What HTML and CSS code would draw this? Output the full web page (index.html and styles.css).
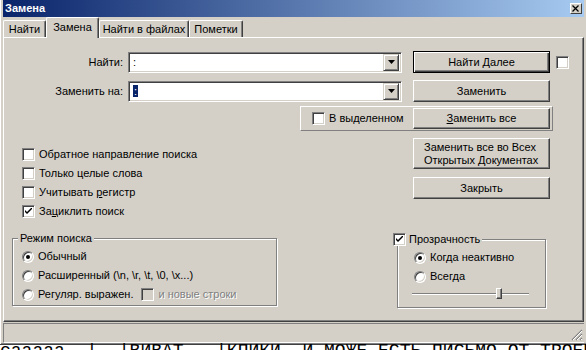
FILE: index.html
```html
<!DOCTYPE html>
<html lang="ru">
<head>
    <meta charset="UTF-8">
    <title>Замена</title>
    <link rel="stylesheet" href="styles.css">
</head>
<body>

    <div class="window">
        <div class="titlebar">
            <span class="title">Замена</span>
            <span class="close-btn">
                <svg width="8" height="7" viewBox="0 0 8 7"><path d="M0.5 0.5 L6.5 6.5 M6.5 0.5 L0.5 6.5" stroke="#000" stroke-width="1.3" fill="none"/></svg>
            </span>
        </div>

        <div class="tabs">
            <div class="tab tab-find">Найти</div>
            <div class="tab tab-replace active">Замена</div>
            <div class="tab tab-files">Найти в файлах</div>
            <div class="tab tab-marks">Пометки</div>
        </div>

        <div class="panel">
            <div class="find-grid">
                <label class="field-label">Найти:</label>
                <div class="combo">
                    <span class="combo-text">:</span>
                    <span class="combo-btn"><svg width="7" height="4" viewBox="0 0 7 4"><polygon points="0,0 7,0 3.5,4" fill="#000"/></svg></span>
                </div>
                <button class="btn default">Найти Далее</button>
                <span class="check"></span>

                <label class="field-label">Заменить на:</label>
                <div class="combo">
                    <span class="combo-text"><span class="selected">:</span></span>
                    <span class="combo-btn"><svg width="7" height="4" viewBox="0 0 7 4"><polygon points="0,0 7,0 3.5,4" fill="#000"/></svg></span>
                </div>
                <button class="btn">Заменить</button>
                <span></span>
            </div>

            <div class="sel-frame">
                <span class="check"></span>
                <span class="sel-label">В выделенном</span>
                <button class="btn btn-all"><u>З</u>аменить все</button>
            </div>

            <div class="middle">
                <div class="options">
                    <div class="opt"><span class="check"></span><span>Обратное направление поиска</span></div>
                    <div class="opt"><span class="check"></span><span>Только целые слова</span></div>
                    <div class="opt"><span class="check"></span><span>Учитывать <u>р</u>егистр</span></div>
                    <div class="opt"><span class="check checked"><svg width="7" height="7" viewBox="0 0 7 7"><path d="M0 2 L0 4 L2 6 L7 1 L7 -1 L2 4 Z" fill="#000"/></svg></span><span>За<u>ц</u>иклить поиск</span></div>
                </div>
                <div class="actions">
                    <button class="btn btn-tall">Заменить все во Всех<br>Открытых <u>Д</u>окументах</button>
                    <button class="btn">Закрыть</button>
                </div>
            </div>

            <div class="bottom">
                <fieldset class="group mode">
                    <legend>Режим поиска</legend>
                    <div class="opt"><span class="radio on"></span><span>Обычный</span></div>
                    <div class="opt"><span class="radio"></span><span>Расширенный (\n, \r, \t, \0, \x...)</span></div>
                    <div class="opt"><span class="radio"></span><span>Регуляр. выражен.</span><span class="check disabled"></span><span class="dim">и новые строки</span></div>
                </fieldset>

                <fieldset class="group transp">
                    <legend><span class="check checked"><svg width="7" height="7" viewBox="0 0 7 7"><path d="M0 2 L0 4 L2 6 L7 1 L7 -1 L2 4 Z" fill="#000"/></svg></span>Прозрачность</legend>
                    <div class="opt"><span class="radio on"></span><span>Когда неактивно</span></div>
                    <div class="opt"><span class="radio"></span><span>Всегда</span></div>
                    <div class="slider">
                        <div class="track"></div>
                        <div class="thumb"></div>
                    </div>
                </fieldset>
            </div>
        </div>

        <div class="statusbar">
            <svg class="grip" width="12" height="12" viewBox="0 0 12 12">
                <path d="M11 1 L1 11 M11 5 L5 11 M11 9 L9 11" stroke="#808080" stroke-width="1.2"/>
                <path d="M11 2 L2 11 M11 6 L6 11 M11 10 L10 11" stroke="#fff" stroke-width="1"/>
            </svg>
        </div>
    </div>

    <div class="editor">сааааа  |  |ВИВАТ   |КПИКИ, И МОЖЕ ЕСТЬ ПИСЬМО ОТ ТРОЕК</div>

</body>
</html>
```

FILE: styles.css
```css
body {
    margin: 0;
    width: 586px;
    height: 350px;
    overflow: hidden;
    background: #fff;
    font-family: "Liberation Sans", Arial, sans-serif;
    font-size: 11px;
    line-height: 13px;
    color: #000;
}
.window {
    box-sizing: border-box;
    height: 345px;
    padding: 0 2px 0 3px;
    background: #d4d0c8;
    border-bottom: 1px solid #404040;
    box-shadow: inset 1px 0 #fff, inset 0 -1px #808080;
}
.titlebar {
    height: 17px;
    display: flex;
    align-items: center;
    justify-content: space-between;
    background: linear-gradient(to right, #0a246a, #a6caf0);
}
.title {
    color: #fff;
    font-weight: bold;
    padding-left: 2px;
}
.close-btn {
    box-sizing: border-box;
    width: 12px;
    height: 11px;
    margin-right: 2px;
    display: flex;
    align-items: center;
    justify-content: center;
    background: #d4d0c8;
    border: 1px solid;
    border-color: #fff #404040 #404040 #fff;
}

/* tabs */
.tabs {
    height: 20px;
    display: flex;
    align-items: flex-end;
    position: relative;
    z-index: 1;
}
.tab {
    box-sizing: border-box;
    height: 17px;
    padding-top: 2px;
    text-align: center;
    background: #d4d0c8;
    border-top: 1px solid #fff;
    border-left: 1px solid #fff;
    border-right: 1px solid #404040;
    border-radius: 2px 2px 0 0;
    box-shadow: inset -1px 0 #808080;
}
.tab.active {
    height: 21px;
    margin-bottom: -1px;
    padding-top: 3px;
}
.tab-find { width: 43px; }
.tab-replace { width: 53px; }
.tab-files { width: 90px; }
.tab-marks { width: 54px; }

.panel {
    box-sizing: border-box;
    height: 285px;
    border: 1px solid;
    border-color: #fff #404040 #404040 #fff;
    box-shadow: inset -1px -1px #808080;
}

/* controls */
.btn {
    box-sizing: border-box;
    height: 22px;
    padding: 0;
    font: inherit;
    color: #000;
    background: #d4d0c8;
    border: 1px solid;
    border-color: #fff #404040 #404040 #fff;
    box-shadow: inset -1px -1px #808080;
}
.btn.default {
    border: 1px solid #000;
    box-shadow: inset 1px 1px #fff, inset -1px -1px #404040, inset -2px -2px #808080;
}
.check {
    box-sizing: border-box;
    flex: none;
    width: 13px;
    height: 13px;
    display: inline-flex;
    align-items: center;
    justify-content: center;
    background: #fff;
    border: 1px solid;
    border-color: #808080 #fff #fff #808080;
    box-shadow: inset 1px 1px #404040, inset -1px -1px #d4d0c8;
}
.radio {
    box-sizing: border-box;
    flex: none;
    width: 12px;
    height: 12px;
    border-radius: 50%;
    display: inline-flex;
    align-items: center;
    justify-content: center;
    background: #fff;
    border: 1px solid;
    border-color: #808080 #fff #fff #808080;
    box-shadow: inset 1px 1px #404040, inset -1px -1px #d4d0c8;
}
.radio.on::after {
    content: "";
    width: 4px;
    height: 4px;
    border-radius: 50%;
    background: #000;
}
.combo {
    box-sizing: border-box;
    height: 21px;
    display: flex;
    align-items: center;
    background: #fff;
    border: 1px solid;
    border-color: #808080 #fff #fff #808080;
    box-shadow: inset 1px 1px #404040, inset -1px -1px #d4d0c8;
    padding: 2px;
}
.combo-text {
    flex: 1;
    padding-left: 2px;
}
.selected {
    background: #0a246a;
    color: #fff;
    padding: 0 1px;
}
.combo-btn {
    box-sizing: border-box;
    width: 16px;
    height: 17px;
    display: flex;
    align-items: center;
    justify-content: center;
    background: #d4d0c8;
    border: 1px solid;
    border-color: #d4d0c8 #404040 #404040 #d4d0c8;
    box-shadow: inset 1px 1px #fff, inset -1px -1px #808080;
}

/* find / replace rows */
.find-grid {
    margin-top: 13px;
    display: grid;
    grid-template-columns: 124px 274px 148px 19px;
    grid-auto-rows: 22px;
    row-gap: 7px;
    align-items: center;
}
.field-label {
    text-align: right;
    padding-right: 5px;
}
.find-grid .btn {
    width: 137px;
    justify-self: end;
}
.find-grid .check {
    justify-self: end;
}

.sel-frame {
    box-sizing: border-box;
    width: 253px;
    height: 25px;
    margin: 4px 0 0 296px;
    padding: 0 2px 0 11px;
    display: flex;
    align-items: center;
    border: 1px solid;
    border-color: #fff #808080 #808080 #fff;
}
.sel-label {
    margin-left: 4px;
}
.btn-all {
    width: 137px;
    height: 21px;
    margin-left: auto;
}

.middle {
    display: grid;
    grid-template-columns: 409px 137px;
}
.options {
    padding: 14px 0 0 18px;
}
.opt {
    height: 19px;
    display: flex;
    align-items: center;
}
.opt .check, .opt .radio {
    margin-right: 4px;
}
.opt .check.disabled {
    background: #d4d0c8;
    margin: 0 4px 0 8px;
}
.dim {
    color: #808080;
    text-shadow: 1px 1px 0 #fff;
}
.actions {
    padding-top: 7px;
    display: flex;
    flex-direction: column;
    gap: 8px;
}
.actions .btn {
    width: 137px;
}
.btn-tall {
    height: 31px;
    padding: 1px 0 0 10px;
    text-align: left;
}

/* group boxes */
.bottom {
    margin-top: 11px;
    display: flex;
    align-items: flex-start;
}
.group {
    margin: 0;
    min-width: 0;
    border: 1px solid #808080;
    box-shadow: 1px 1px 0 #fff, inset 1px 1px 0 #fff;
}
.group legend {
    padding: 0 2px;
    font-weight: normal;
    background: #d4d0c8;
}
.mode {
    box-sizing: border-box;
    width: 265px;
    margin-left: 8px;
    padding: 2px 0 1px 9px;
}
.mode legend {
    margin-left: -4px;
}
.transp {
    box-sizing: border-box;
    width: 149px;
    margin: 1px 0 0 120px;
    padding: 2px 0 5px 16px;
}
.transp legend {
    display: flex;
    align-items: center;
    margin-left: -21px;
    padding: 0 2px 0 0;
}
.transp legend .check {
    margin-right: 3px;
}
.slider {
    position: relative;
    width: 117px;
    height: 16px;
    margin-left: -2px;
}
.track {
    position: relative;
    top: 7px;
    height: 2px;
    border-top: 1px solid #808080;
    border-bottom: 1px solid #fff;
    box-sizing: border-box;
}
.thumb {
    position: absolute;
    left: 84px;
    top: 2px;
    box-sizing: border-box;
    width: 6px;
    height: 11px;
    background: #d4d0c8;
    border: 1px solid;
    border-color: #fff #404040 #404040 #fff;
    box-shadow: inset -1px -1px #808080;
}

.statusbar {
    box-sizing: border-box;
    height: 20px;
    margin-top: 1px;
    display: flex;
    align-items: flex-end;
    justify-content: flex-end;
    border-top: 1px solid #808080;
    border-left: 1px solid #808080;
    border-bottom: 1px solid #fff;
}
.grip {
    margin: 0 1px 1px 0;
}

.editor {
    margin-top: -3px;
    font-family: "Liberation Mono", "Courier New", monospace;
    font-size: 18px;
    line-height: 18px;
    white-space: pre;
    color: #000;
}
```
